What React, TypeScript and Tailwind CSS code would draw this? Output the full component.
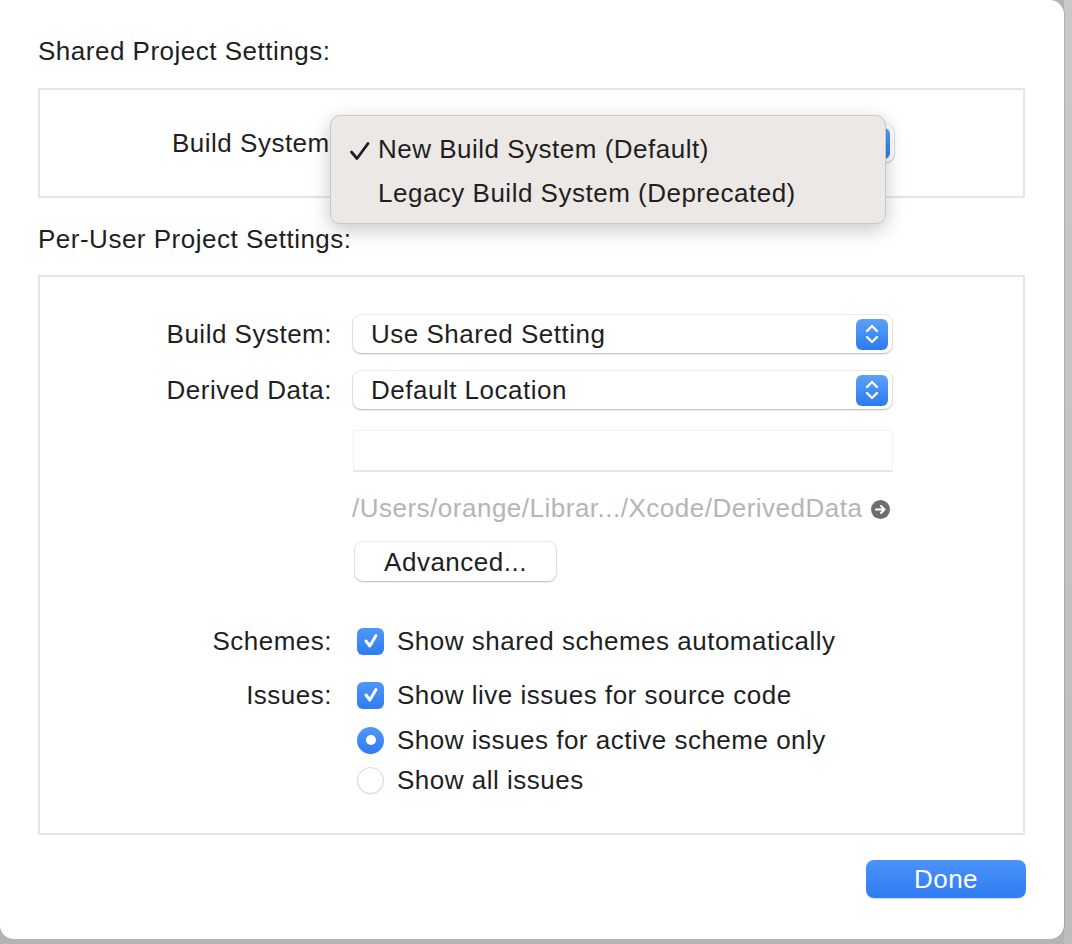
import React from "react";

const font = { fontFamily: '"Liberation Sans", Arial, sans-serif' };

function Stepper() {
  return (
    <div className="w-[32px] h-[31px] rounded-[6px] bg-gradient-to-b from-[#5ba1f9] to-[#2b79f2] flex items-center justify-center">
      <svg width="16" height="22" viewBox="0 0 16 22" fill="none">
        <path d="M3 8 L8 3 L13 8" stroke="white" strokeWidth="2.4" strokeLinecap="round" strokeLinejoin="round" />
        <path d="M3 14 L8 19 L13 14" stroke="white" strokeWidth="2.4" strokeLinecap="round" strokeLinejoin="round" />
      </svg>
    </div>
  );
}

function Popup({ text }: { text: string }) {
  return (
    <div className="w-[539px] h-[38px] bg-white rounded-[8px] shadow-[0_0_0_1px_rgba(0,0,0,0.07),0_1px_2px_rgba(0,0,0,0.22)] flex items-center justify-between pl-[18px] pr-[4px]">
      <span>{text}</span>
      <Stepper />
    </div>
  );
}

function Checkbox() {
  return (
    <div className="w-[27px] h-[27px] rounded-[6px] bg-gradient-to-b from-[#4f97f8] to-[#2f7cf3] flex items-center justify-center">
      <svg width="18" height="18" viewBox="0 0 18 18" fill="none">
        <path d="M4 9 L7.8 14 L14 3.5" stroke="white" strokeWidth="3" strokeLinecap="round" strokeLinejoin="round" />
      </svg>
    </div>
  );
}

function Row({ label, children, className }: { label?: string; children: React.ReactNode; className?: string }) {
  return (
    <div className={"flex items-center " + (className || "")}>
      <div className="w-[293px] text-right pr-[1px] shrink-0 whitespace-nowrap">{label}</div>
      <div className="ml-[20px] flex items-center">{children}</div>
    </div>
  );
}

export default function App() {
  return (
    <div className="w-[1072px] h-[944px] bg-[#b4b4b4] overflow-hidden relative" style={font}>
      <div className="absolute right-0 top-0 w-[8px] h-[944px] bg-gradient-to-b from-[#c9c9c9] to-[#bdbdbd]" />
      <div className="relative w-[1064px] h-[939px] bg-white rounded-tr-[14px] rounded-br-[14px] rounded-bl-[14px] pl-[38px] pt-[35px] text-[26px] tracking-[0.5px] text-[#1f1f1f] leading-[30px] shadow-[1px_0_0_rgba(0,0,0,0.12)]">
        <div className="h-[32px] flex items-center whitespace-nowrap">Shared Project Settings:</div>
        <div className="mt-[21px] w-[987px] h-[110px] border-2 border-[#e5e5e5] relative flex items-center">
          <div className="w-[294px] shrink-0 whitespace-nowrap pl-[132px]">Build System</div>
          <div className="ml-[21px]">
            <Popup text="" />
          </div>
        </div>
        <div className="mt-[25px] h-[32px] flex items-center whitespace-nowrap">Per-User Project Settings:</div>
        <div className="mt-[20px] w-[987px] h-[560px] border-2 border-[#e5e5e5] pt-[38px]">
          <Row label="Build System:">
            <Popup text="Use Shared Setting" />
          </Row>
          <Row label="Derived Data:" className="mt-[18px]">
            <Popup text="Default Location" />
          </Row>
          <Row className="mt-[21px]">
            <div className="w-[540px] h-[42px] bg-white border-t border-x border-[#f3f3f3] border-b-2 border-b-[#e6e6e6]" />
          </Row>
          <Row className="mt-[21px]">
            <div className="w-[540px] flex items-center justify-between -ml-[1px]">
              <span className="text-[#b5b5b5] leading-[30px] whitespace-nowrap">/Users/orange/Librar.../Xcode/DerivedData</span>
              <svg width="19" height="19" viewBox="0 0 19 19" className="mr-[2px] mt-[2px]">
                <circle cx="9.5" cy="9.5" r="9.5" fill="#6e6e6e" />
                <path d="M5 9.5 H13.5 M10 6 L13.5 9.5 L10 13" stroke="white" strokeWidth="2" fill="none" strokeLinecap="round" strokeLinejoin="round" />
              </svg>
            </div>
          </Row>
          <Row className="mt-[19px]">
            <div className="ml-[2px] w-[201px] h-[39px] bg-white rounded-[8px] shadow-[0_0_0_1px_rgba(0,0,0,0.07),0_1px_2px_rgba(0,0,0,0.22)] flex items-center justify-center">
              Advanced...
            </div>
          </Row>
          <Row label="Schemes:" className="mt-[46px] h-[28px]">
            <div className="ml-[4px] flex items-center gap-[13px]">
              <Checkbox />
              <span className="whitespace-nowrap">Show shared schemes automatically</span>
            </div>
          </Row>
          <Row label="Issues:" className="mt-[26px] h-[28px]">
            <div className="ml-[4px] flex items-center gap-[13px]">
              <Checkbox />
              <span className="whitespace-nowrap">Show live issues for source code</span>
            </div>
          </Row>
          <Row className="mt-[17px] h-[28px]">
            <div className="ml-[4px] flex items-center gap-[13px]">
              <div className="w-[27px] h-[27px] rounded-full bg-gradient-to-b from-[#4f97f8] to-[#2f7cf3] flex items-center justify-center">
                <div className="w-[10px] h-[10px] rounded-full bg-white" />
              </div>
              <span className="whitespace-nowrap">Show issues for active scheme only</span>
            </div>
          </Row>
          <Row className="mt-[12px] h-[28px]">
            <div className="ml-[4px] flex items-center gap-[13px]">
              <div className="w-[27px] h-[27px] rounded-full bg-white border border-[#d6d6d6] shadow-[0_1px_1px_rgba(0,0,0,0.06)]" />
              <span className="whitespace-nowrap">Show all issues</span>
            </div>
          </Row>
        </div>
        <div className="mt-[25px] w-[988px] flex justify-end">
          <div className="w-[160px] h-[38px] rounded-[8px] bg-gradient-to-b from-[#4b93f9] to-[#2f7cf4] text-white flex items-center justify-center shadow-[0_1px_1px_rgba(0,0,0,0.15)]">
            Done
          </div>
        </div>

        {/* Dropdown menu overlay */}
        <div className="absolute left-[330px] top-[115px] w-[556px] h-[109px] rounded-[10px] bg-[#ece8e5] border border-[#cbc7c4] shadow-[0_6px_20px_rgba(0,0,0,0.22)] pt-[11px]">
          <div className="h-[44px] flex items-center relative pl-[47px]">
            <svg width="22" height="20" viewBox="0 0 22 20" className="absolute left-[18px] top-[14px]" fill="none">
              <path d="M2.5 11 L8 17.5 L19 2.5" stroke="#1f1f1f" strokeWidth="2.8" strokeLinecap="round" strokeLinejoin="round" />
            </svg>
            <span className="whitespace-nowrap">New Build System (Default)</span>
          </div>
          <div className="h-[44px] flex items-center pl-[47px] whitespace-nowrap">Legacy Build System (Deprecated)</div>
        </div>
      </div>
    </div>
  );
}
